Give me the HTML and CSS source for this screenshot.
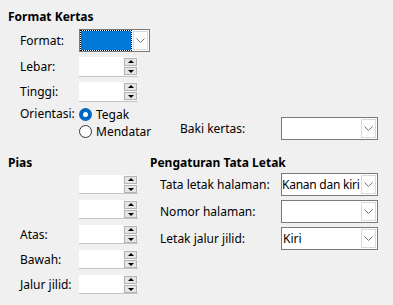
FILE: index.html
```html
<!DOCTYPE html>
<html lang="id">
<head>
    <link rel="stylesheet" href="styles.css">
    <meta charset="UTF-8">
    <title>Format Kertas</title>
</head>
<body>

    <div class="section">
        <div class="heading">Format Kertas</div>

        <div class="row row-format">
            <div class="label">Format:</div>
            <div class="combo combo-small">
                <div class="combo-value focused"></div>
                <div class="combo-btn"><svg width="9" height="5" viewBox="0 0 9 5"><polyline points="0.5,0.5 4.5,4.5 8.5,0.5" fill="none" stroke="#707070" stroke-width="1"/></svg></div>
            </div>
        </div>

        <div class="row row-spin">
            <div class="label">Lebar:</div>
            <div class="spin"><div class="spin-field"></div><div class="spin-btns"><span class="spin-up"></span><span class="spin-down"></span></div></div>
        </div>

        <div class="row row-spin">
            <div class="label">Tinggi:</div>
            <div class="spin"><div class="spin-field"></div><div class="spin-btns"><span class="spin-up"></span><span class="spin-down"></span></div></div>
        </div>

        <div class="orient">
            <div class="label orient-label">Orientasi:</div>
            <div class="radios">
                <div class="radio-label"><span class="radio checked"></span><span>Tegak</span></div>
                <div class="radio-label"><span class="radio"></span><span>Mendatar</span></div>
            </div>
            <div class="tray">
                <div class="tray-label">Baki kertas:</div>
                <div class="combo combo-wide">
                    <div class="combo-value"></div>
                    <div class="combo-btn"><svg width="9" height="5" viewBox="0 0 9 5"><polyline points="0.5,0.5 4.5,4.5 8.5,0.5" fill="none" stroke="#707070" stroke-width="1"/></svg></div>
                </div>
            </div>
        </div>
    </div>

    <div class="bottom">
        <div class="margins">
            <div class="heading">Pias</div>
            <div class="spin-list">
                <div class="row row-spin2">
                    <div class="label"></div>
                    <div class="spin"><div class="spin-field"></div><div class="spin-btns"><span class="spin-up"></span><span class="spin-down"></span></div></div>
                </div>
                <div class="row row-spin2">
                    <div class="label"></div>
                    <div class="spin"><div class="spin-field"></div><div class="spin-btns"><span class="spin-up"></span><span class="spin-down"></span></div></div>
                </div>
                <div class="row row-spin2">
                    <div class="label">Atas:</div>
                    <div class="spin"><div class="spin-field"></div><div class="spin-btns"><span class="spin-up"></span><span class="spin-down"></span></div></div>
                </div>
                <div class="row row-spin2">
                    <div class="label">Bawah:</div>
                    <div class="spin"><div class="spin-field"></div><div class="spin-btns"><span class="spin-up"></span><span class="spin-down"></span></div></div>
                </div>
                <div class="row row-spin2">
                    <div class="label">Jalur jilid:</div>
                    <div class="spin"><div class="spin-field"></div><div class="spin-btns"><span class="spin-up"></span><span class="spin-down"></span></div></div>
                </div>
            </div>
        </div>

        <div class="layout">
            <div class="heading">Pengaturan Tata Letak</div>
            <div class="combo-list">
                <div class="row row-combo">
                    <div class="label2">Tata letak halaman:</div>
                    <div class="combo combo-wide">
                        <div class="combo-value tight">Kanan dan kiri</div>
                        <div class="combo-btn"><svg width="9" height="5" viewBox="0 0 9 5"><polyline points="0.5,0.5 4.5,4.5 8.5,0.5" fill="none" stroke="#707070" stroke-width="1"/></svg></div>
                    </div>
                </div>
                <div class="row row-combo">
                    <div class="label2">Nomor halaman:</div>
                    <div class="combo combo-wide">
                        <div class="combo-value"></div>
                        <div class="combo-btn"><svg width="9" height="5" viewBox="0 0 9 5"><polyline points="0.5,0.5 4.5,4.5 8.5,0.5" fill="none" stroke="#707070" stroke-width="1"/></svg></div>
                    </div>
                </div>
                <div class="row row-combo">
                    <div class="label2">Letak jalur jilid:</div>
                    <div class="combo combo-wide">
                        <div class="combo-value">Kiri</div>
                        <div class="combo-btn"><svg width="9" height="5" viewBox="0 0 9 5"><polyline points="0.5,0.5 4.5,4.5 8.5,0.5" fill="none" stroke="#707070" stroke-width="1"/></svg></div>
                    </div>
                </div>
            </div>
        </div>
    </div>

</body>
</html>
```

FILE: styles.css
```css
body {
    margin: 0;
    width: 393px;
    height: 305px;
    background-color: #f0f0f0;
    font-family: "Noto Sans", "Liberation Sans", sans-serif;
    font-size: 12px;
    color: #000;
    overflow: hidden;
}

.section {
    padding-left: 8px;
    padding-top: 9px;
}

.heading {
    font-weight: bold;
    height: 16px;
    line-height: 16px;
    white-space: nowrap;
}

.row {
    display: flex;
    align-items: center;
}

.label {
    width: 59px;
    padding-left: 12px;
    white-space: nowrap;
}

.row-format {
    margin-top: 4px;
    height: 23px;
}

.row-spin {
    margin-top: 4px;
    height: 21px;
}

.row-spin:first-of-type {
    margin-top: 5px;
}

/* Combobox */
.combo {
    display: flex;
    height: 23px;
    box-sizing: border-box;
    border: 1px solid #7a7a7a;
    background-color: #fff;
}

.combo-small {
    width: 71px;
}

.combo-wide {
    width: 97px;
}

.combo-value {
    flex: 1;
    line-height: 21px;
    padding-left: 1px;
    white-space: nowrap;
}

.combo-value.tight {
    padding-left: 0;
    letter-spacing: -0.25px;
}

.combo-value.focused {
    border: 1px dotted #000;
    background-color: #0078d7;
    background-clip: padding-box;
}

.combo-btn {
    width: 15px;
    margin: 1px;
    box-sizing: border-box;
    border: 1px solid #dadada;
    background-color: #fff;
    display: flex;
    align-items: center;
    justify-content: center;
}

/* Spinbox */
.spin {
    display: flex;
    width: 59px;
    height: 20px;
    box-sizing: border-box;
    border-bottom: 1px solid #c4c4c4;
}

.spin-field {
    width: 44px;
    background-color: #fff;
}

.spin-btns {
    flex: 1;
    background-color: #f7f7f7;
    display: flex;
    flex-direction: column;
    padding: 1px 1px 0 1px;
    gap: 1px;
}

.spin-up,
.spin-down {
    display: block;
    height: 8px;
    box-sizing: border-box;
    border: 1px solid #b4b4b4;
    background-color: #e5e5e5;
    position: relative;
}

.spin-up::after,
.spin-down::after {
    content: "";
    position: absolute;
    left: 3px;
    border-left: 3px solid transparent;
    border-right: 3px solid transparent;
}

.spin-up::after {
    top: 1px;
    border-bottom: 3px solid #000;
}

.spin-down::after {
    top: 2px;
    border-top: 3px solid #000;
}

/* Orientation */
.orient {
    display: flex;
    align-items: flex-end;
    margin-top: 4px;
}

.orient-label {
    align-self: flex-start;
    line-height: 16px;
}

.radios {
    display: flex;
    flex-direction: column;
    gap: 1px;
    width: 101px;
}

.radio-label {
    display: flex;
    align-items: center;
    height: 16px;
    gap: 4px;
    white-space: nowrap;
}

.radio {
    width: 13px;
    height: 13px;
    box-sizing: border-box;
    border-radius: 50%;
    border: 1px solid #333;
    background-color: #fff;
}

.radio.checked {
    border: 4px solid #0067c0;
    background-color: #fff;
}

.tray {
    display: flex;
    align-items: center;
    margin-bottom: -1px;
}

.tray-label {
    width: 101px;
    white-space: nowrap;
}

/* Bottom part */
.bottom {
    display: flex;
    margin-top: 16px;
}

.margins {
    width: 142px;
    padding-left: 8px;
}

.spin-list {
    margin-top: 4px;
    display: flex;
    flex-direction: column;
    gap: 6px;
}

.row-spin2 {
    height: 19px;
}

.row-spin2 .spin {
    height: 19px;
}

.combo-list {
    margin-top: 2px;
    display: flex;
    flex-direction: column;
    gap: 4px;
}

.row-combo {
    height: 23px;
}

.label2 {
    width: 121px;
    padding-left: 10px;
    white-space: nowrap;
}
```
